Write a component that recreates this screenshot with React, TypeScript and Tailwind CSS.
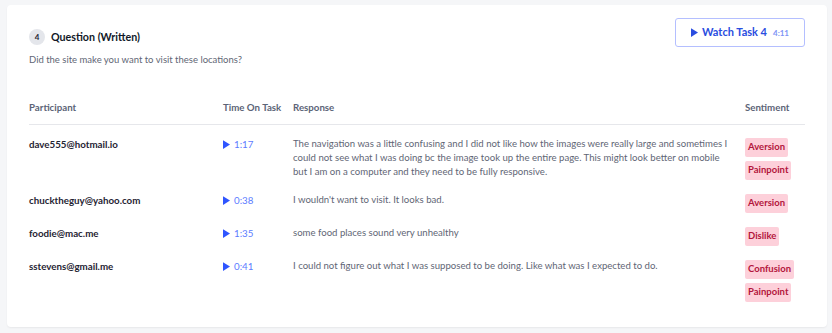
import React from "react";

type Row = {
  email: string;
  time: string;
  response: string;
  sentiments: string[];
};

const rows: Row[] = [
  {
    email: "dave555@hotmail.io",
    time: "1:17",
    response:
      "The navigation was a little confusing and I did not like how the images were really large and sometimes I could not see what I was doing bc the image took up the entire page. This might look better on mobile but I am on a computer and they need to be fully responsive.",
    sentiments: ["Aversion", "Painpoint"],
  },
  {
    email: "chucktheguy@yahoo.com",
    time: "0:38",
    response: "I wouldn't want to visit. It looks bad.",
    sentiments: ["Aversion"],
  },
  {
    email: "foodie@mac.me",
    time: "1:35",
    response: "some food places sound very unhealthy",
    sentiments: ["Dislike"],
  },
  {
    email: "sstevens@gmail.me",
    time: "0:41",
    response:
      "I could not figure out what I was supposed to be doing. Like what was I expected to do.",
    sentiments: ["Confusion", "Painpoint"],
  },
];

function PlayIcon({ className }: { className?: string }) {
  return (
    <svg viewBox="0 0 8 10" className={className} fill="currentColor">
      <path d="M0 0 L8 5 L0 10 Z" />
    </svg>
  );
}

function Badge({ label }: { label: string }) {
  return (
    <span className="inline-flex h-[19px] items-center rounded-[2px] bg-[#fdd0da] px-[3px] text-[9.5px] font-bold text-[#b3163c]">
      {label}
    </span>
  );
}

export default function App() {
  return (
    <div
      className="h-[333px] bg-[#f5f6f8] pt-[5px] pr-[5px] pl-[7px]"
      style={{ fontFamily: "Lato, 'Open Sans', sans-serif" }}
    >
      <div className="h-[322px] rounded-[4px] bg-white px-[22px] pt-[13px] shadow-[0_1px_2px_rgba(0,0,0,0.06)]">
        {/* Header */}
        <div className="flex items-start justify-between">
          <div className="pt-[11px]">
            <div className="flex items-center gap-[6px]">
              <span className="flex h-[16px] w-[16px] items-center justify-center rounded-full bg-[#e4e6eb] text-[8px] font-bold text-[#1f2433]">
                4
              </span>
              <h2 className="text-[10.7px] leading-[16px] font-bold text-[#111827]">
                Question (Written)
              </h2>
            </div>
            <p className="mt-[8px] text-[9.5px] leading-[14px] text-[#5f6675]">
              Did the site make you want to visit these locations?
            </p>
          </div>
          <button className="flex h-[29px] w-[130px] items-center justify-center gap-[6px] rounded-[3px] border-[1.5px] border-[#b4bfff] text-[#2a4de0]">
            <span className="flex items-center gap-[4px] text-[11px] font-bold">
              <PlayIcon className="h-[9px] w-[7px]" />
              Watch Task 4
            </span>
            <span className="text-[8px] font-bold text-[#7d93f5]">4:11</span>
          </button>
        </div>

        {/* Table header */}
        <div className="mt-[33px] grid grid-cols-[194px_70px_452px_60px] border-b border-[#e6e7eb] pb-[10px] text-[9.7px] leading-[14px] font-bold text-[#5c6477]">
          <span>Participant</span>
          <span>Time On Task</span>
          <span>Response</span>
          <span>Sentiment</span>
        </div>

        {/* Rows */}
        <div className="flex flex-col gap-[13px] pt-[12px]">
          {rows.map((row) => (
            <div
              key={row.email}
              className="grid grid-cols-[194px_70px_452px_60px] items-start"
            >
              <span className="text-[9.75px] leading-[14px] font-bold text-[#1f2433]">
                {row.email}
              </span>
              <span className="flex items-center gap-[4px] text-[9.75px] leading-[14px] text-[#5b7bff]">
                <PlayIcon className="h-[9px] w-[7px] text-[#2f55ff]" />
                {row.time}
              </span>
              <p className="pr-[14px] text-[9.6px] leading-[14px] text-[#5f6675]">
                {row.response}
              </p>
              <div className="flex flex-col items-start gap-[4px] pt-[1px]">
                {row.sentiments.map((s) => (
                  <Badge key={s} label={s} />
                ))}
              </div>
            </div>
          ))}
        </div>
      </div>
    </div>
  );
}
